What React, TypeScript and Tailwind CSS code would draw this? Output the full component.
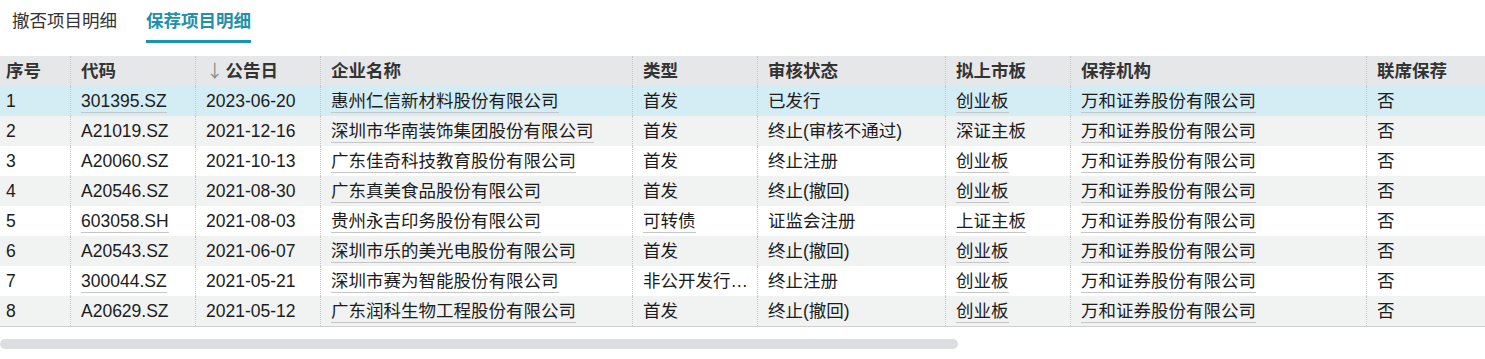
import clsx from "clsx";

type Row = {
  no: number;
  code: string;
  codeLink: boolean;
  date: string;
  company: string;
  type: string;
  typeLink: boolean;
  status: string;
  board: string;
  boardLink: boolean;
  sponsor: string;
  joint: string;
};

const rows: Row[] = [
  { no: 1, code: "301395.SZ", codeLink: true, date: "2023-06-20", company: "惠州仁信新材料股份有限公司", type: "首发", typeLink: false, status: "已发行", board: "创业板", boardLink: true, sponsor: "万和证券股份有限公司", joint: "否" },
  { no: 2, code: "A21019.SZ", codeLink: false, date: "2021-12-16", company: "深圳市华南装饰集团股份有限公司", type: "首发", typeLink: false, status: "终止(审核不通过)", board: "深证主板", boardLink: false, sponsor: "万和证券股份有限公司", joint: "否" },
  { no: 3, code: "A20060.SZ", codeLink: false, date: "2021-10-13", company: "广东佳奇科技教育股份有限公司", type: "首发", typeLink: false, status: "终止注册", board: "创业板", boardLink: true, sponsor: "万和证券股份有限公司", joint: "否" },
  { no: 4, code: "A20546.SZ", codeLink: false, date: "2021-08-30", company: "广东真美食品股份有限公司", type: "首发", typeLink: false, status: "终止(撤回)", board: "创业板", boardLink: true, sponsor: "万和证券股份有限公司", joint: "否" },
  { no: 5, code: "603058.SH", codeLink: true, date: "2021-08-03", company: "贵州永吉印务股份有限公司", type: "可转债", typeLink: true, status: "证监会注册", board: "上证主板", boardLink: true, sponsor: "万和证券股份有限公司", joint: "否" },
  { no: 6, code: "A20543.SZ", codeLink: false, date: "2021-06-07", company: "深圳市乐的美光电股份有限公司", type: "首发", typeLink: false, status: "终止(撤回)", board: "创业板", boardLink: true, sponsor: "万和证券股份有限公司", joint: "否" },
  { no: 7, code: "300044.SZ", codeLink: true, date: "2021-05-21", company: "深圳市赛为智能股份有限公司", type: "非公开发行…", typeLink: false, status: "终止注册", board: "创业板", boardLink: true, sponsor: "万和证券股份有限公司", joint: "否" },
  { no: 8, code: "A20629.SZ", codeLink: false, date: "2021-05-12", company: "广东润科生物工程股份有限公司", type: "首发", typeLink: false, status: "终止(撤回)", board: "创业板", boardLink: true, sponsor: "万和证券股份有限公司", joint: "否" },
];

const cols = ["w-[70px]", "w-[125px]", "w-[125px]", "w-[312px]", "w-[125px]", "w-[188px]", "w-[125px]", "w-[296px]", "w-[125px]", "w-[125px]", "w-[125px]", "w-[125px]", "w-[125px]", "w-[125px]"];

const Link = ({ on, children }: { on: boolean; children: React.ReactNode }) =>
  on ? (
    <span className="inline-block leading-[22px] border-b border-[#c6c6c6]">{children}</span>
  ) : (
    <span>{children}</span>
  );

const cellBase =
  "h-[30px] p-0 pl-[10px] pr-[4px] border-l border-dotted border-[#cdc3c8] whitespace-nowrap overflow-hidden align-middle";
const firstCell = "h-[30px] p-0 pl-[6px] whitespace-nowrap align-middle";

export default function App() {
  return (
    <div
      className="w-[1485px] h-[359px] bg-white overflow-hidden text-[17.5px] text-[#1c1c1c]"
      style={{ fontFamily: '"Liberation Sans", "Noto Sans CJK SC", sans-serif' }}
    >
      {/* Tabs */}
      <div className="flex gap-[29px] pl-[12px] pt-[9px] h-[56px]">
        <div className="leading-[24px] text-[#333]">撤否项目明细</div>
        <div className="flex flex-col">
          <div className="leading-[24px] font-bold text-[#2390a8]">保荐项目明细</div>
          <div className="mt-[7px] h-[3px] bg-[#1496b1]" />
        </div>
      </div>

      {/* Table */}
      <div className="w-[1485px] overflow-hidden border-b border-[#cfcfcf]">
        <table className="table-fixed border-separate border-spacing-0 w-[2116px]">
          <colgroup>
            {cols.map((c, i) => (
              <col key={i} className={c} />
            ))}
          </colgroup>
          <thead>
            <tr className="bg-[#e6e7e9] text-left font-bold text-[#333]">
              <th className={firstCell}>序号</th>
              <th className={cellBase}>代码</th>
              <th className={cellBase}>
                <span
                  className="text-[#8a8a8a] font-normal"
                  style={{ fontFamily: '"Noto Sans CJK SC", sans-serif' }}
                >
                  ↓
                </span>
                <span className="ml-[2px]">公告日</span>
              </th>
              <th className={cellBase}>企业名称</th>
              <th className={cellBase}>类型</th>
              <th className={cellBase}>审核状态</th>
              <th className={cellBase}>拟上市板</th>
              <th className={cellBase}>保荐机构</th>
              <th className={cellBase}>联席保荐</th>
              <th className={cellBase}></th>
              <th className={cellBase}></th>
              <th className={cellBase}></th>
              <th className={cellBase}></th>
              <th className={cellBase}></th>
            </tr>
          </thead>
          <tbody>
            {rows.map((r, i) => (
              <tr
                key={r.no}
                className={clsx(i === 0 ? "bg-[#d4ecf4]" : i % 2 === 1 ? "bg-[#f1f2f2]" : "bg-white")}
              >
                <td className={firstCell}>{r.no}</td>
                <td className={cellBase}>
                  <Link on={r.codeLink}>{r.code}</Link>
                </td>
                <td className={cellBase}>{r.date}</td>
                <td className={cellBase}>
                  <Link on>{r.company}</Link>
                </td>
                <td className={cellBase}>
                  {r.typeLink ? <Link on>{r.type}</Link> : r.type}
                </td>
                <td className={cellBase}>{r.status}</td>
                <td className={cellBase}>
                  <Link on={r.boardLink}>{r.board}</Link>
                </td>
                <td className={cellBase}>
                  <Link on>{r.sponsor}</Link>
                </td>
                <td className={cellBase}>{r.joint}</td>
                <td className={cellBase}></td>
                <td className={cellBase}></td>
                <td className={cellBase}></td>
                <td className={cellBase}></td>
                <td className={cellBase}></td>
              </tr>
            ))}
          </tbody>
        </table>
      </div>

      {/* Horizontal scrollbar */}
      <div className="mt-[12px] h-[10px] w-[958px] rounded-full bg-[#dcdde0]" />
    </div>
  );
}
